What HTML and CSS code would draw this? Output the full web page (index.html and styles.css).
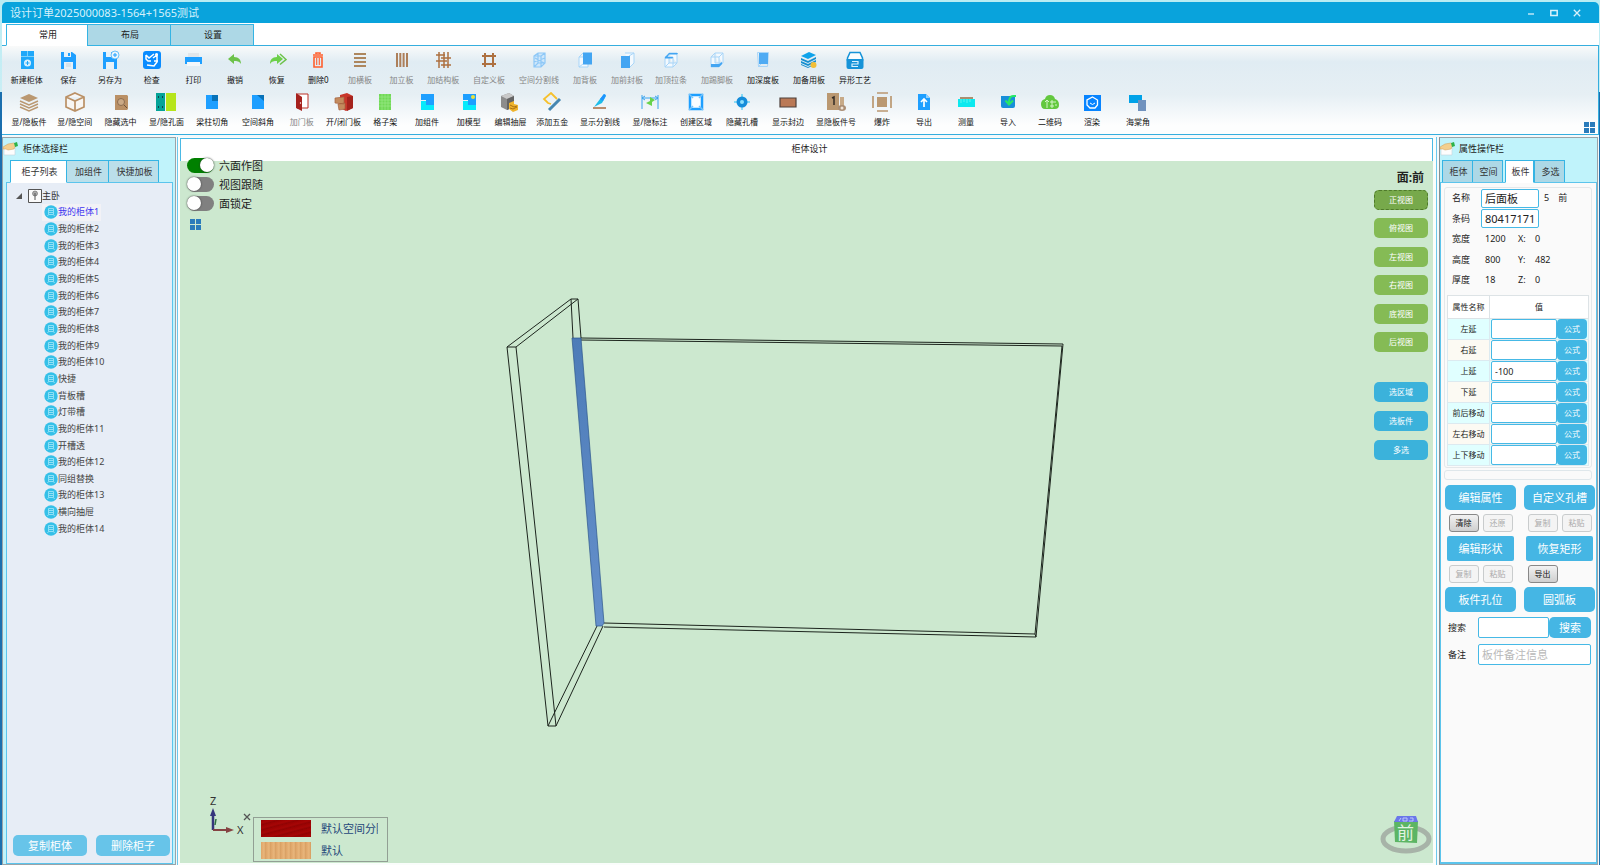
FILE: index.html
```html
<!DOCTYPE html>
<html lang="zh-CN">
<head>
    <meta charset="UTF-8">
    <meta name="viewport" content="width=device-width, initial-scale=1.0">
    <title>设计订单2025000083-1564+1565测试</title>
    <link rel="stylesheet" href="styles.css">
</head>
<body>
    <!-- Shared icons -->
    <svg class="defs" width="0" height="0">
        <symbol id="cabinet" viewBox="0 0 14 14">
            <circle cx="7" cy="7" r="6.700" fill="#35c0e8"/>
            <path d="M4.500 3.500h5v6h-5zM4.500 5.500h5M4.500 7.500h5M4.500 9.500L3.500 11M9.500 9.500l1 1.500" fill="none" stroke="#8fe0f6" stroke-width="1"/>
        </symbol>
        <symbol id="hand" viewBox="0 0 16 14">
            <path d="M1 6h11v7H1z" fill="#fdfdfd" stroke="#c4d4dc" stroke-width=".6"/>
            <path d="M0 5l5-3 6-1 2 2-2 4-6 1-2-1H0z" fill="#f3cf8e" stroke="#cf9c55" stroke-width=".5"/>
            <path d="M11 1l3-1 1 4-3 1z" fill="#2cb34a"/>
        </symbol>
        <symbol id="tiles" viewBox="0 0 11 11">
            <path d="M0 0h5v5H0zM6 0h5v5H6zM0 6h5v5H0zM6 6h5v5H6z" fill="#2a7cbb"/>
        </symbol>
    </svg>

    <header class="titlebar">
        <span>设计订单2025000083-1564+1565测试</span>
        <div class="window-buttons">
            <button aria-label="最小化"><svg viewBox="0 0 8 8" width="8" height="8"><path d="M1 5h6" stroke="#d7f1fb" stroke-width="1.300"/></svg></button>
            <button aria-label="最大化"><svg viewBox="0 0 8 8" width="8" height="8"><path d="M.8 1.500h6.400v5H.8z" fill="none" stroke="#d7f1fb" stroke-width="1.500"/></svg></button>
            <button aria-label="关闭"><svg viewBox="0 0 8 8" width="8" height="8"><path d="M.8.8l6.400 6.400M7.200.8L.8 7.200" stroke="#d7f1fb" stroke-width="1.300"/></svg></button>
        </div>
    </header>

    <nav class="menu-tabs">
        <button class="tab active">常用</button>
        <button class="tab">布局</button>
        <button class="tab">设置</button>
    </nav>

    <div class="toolbar">
        <div class="tool-row">
            <div class="tool-group file-group">
                <button class="tool"><svg viewBox="0 0 20 20"><path d="M4 1h13v5H4zM4 7h13v12H4z" fill="#1fa8fa"/><path d="M10.500 1v5M4 6.500h13" stroke="#7bd0fb"/><circle cx="10.500" cy="13" r="3.500" fill="#d9f1fe"/><path d="M10.500 11v4M8.500 13h4" stroke="#1fa8fa"/></svg><span>新建柜体</span></button>
                <button class="tool"><svg viewBox="0 0 20 20"><path d="M3 2h11l4 3v14H3z" fill="#1e9fff"/><path d="M6 2h7v5H6zM6 12h9v7H6z" fill="#e6f1f8"/><path d="M10 3h2v3h-2z" fill="#1e9fff"/><path d="M8 14h5M8 16h5" stroke="#b9c8d2" stroke-width=".7"/></svg><span>保存</span></button>
                <button class="tool"><svg viewBox="0 0 20 20"><path d="M3 2h11l3 3v14H3z" fill="#1e9fff"/><path d="M6 2h5v5H6zM6 12h8v7H6z" fill="#e6f1f8"/><circle cx="15" cy="5" r="4" fill="#eaf6fd" stroke="#4cb4f8" stroke-width=".8"/><path d="M15 3v4M13 5h4" stroke="#1e9fff"/></svg><span>另存为</span></button>
                <button class="tool"><svg viewBox="0 0 20 20"><rect x="1" y="1" width="18" height="18" rx="3" fill="#0a8cff"/><path d="M4 5v4l2 2h3M4 5l3 3 5-4M11 8l4-3v7l-3 4-7-1M12 11h4" fill="none" stroke="#fff" stroke-width="1.500"/><circle cx="14.500" cy="4.500" r="1.500" fill="#fff"/></svg><span>检查</span></button>
                <button class="tool"><svg viewBox="0 0 20 20"><path d="M5 3h11v4H5z" fill="#e1e6ea"/><path d="M2 7h17v7H2z" fill="#1e9fff"/><path d="M4 12h13v4H4z" fill="#f3f7fa"/></svg><span>打印</span></button>
                <button class="tool"><svg viewBox="0 0 20 20"><path d="M3 9l6-5v3c5 0 7 3 7 7-2-3-4-3-7-3v3z" fill="#6cc24a"/></svg><span>撤销</span></button>
                <button class="tool"><svg viewBox="0 0 20 20"><path d="M16 9l-6-5v3c-5 0-7 3-7 7 2-3 4-3 7-3v3z" fill="#6cd04a"/><path d="M13 4l6 5.500-6 5" fill="none" stroke="#6cc24a" stroke-width="1.500"/></svg><span>恢复</span></button>
                <button class="tool"><svg viewBox="0 0 20 20"><path d="M5 5h10M8 4V3h4v1M6 7h8v10H6z" fill="none" stroke="#ff5f2e" stroke-width="1.600"/><path d="M8.700 8v7M11.300 8v7" stroke="#ff5f2e" stroke-width="1.100"/></svg><span>删除0</span></button>
                <button class="tool" disabled><svg viewBox="0 0 20 20"><path d="M4 4h12M4 8h12M4 12h12M4 16h12" stroke="#ad875e" stroke-width="2"/></svg><span>加横板</span></button>
                <button class="tool" disabled><svg viewBox="0 0 20 20"><path d="M5 3v14M8.300 3v14M11.600 3v14M15 3v14" stroke="#ad7f5a" stroke-width="2"/></svg><span>加立板</span></button>
                <button class="tool" disabled><svg viewBox="0 0 20 20"><path d="M6 2v16M11 2v16M15 2v16M3 5h9M8 8h10M3 11h11M8 15h10" stroke="#ad7040" stroke-width="1.500"/></svg><span>加结构板</span></button>
            </div>
            <button class="tool wide" disabled><svg viewBox="0 0 20 20"><path d="M6 3v14M14 3v14M3 6h14M3 14h14" stroke="#ad7040" stroke-width="2"/></svg><span>自定义板</span></button>
            <button class="tool wide" disabled><svg viewBox="0 0 20 20"><path d="M5 6l4-3h7v10l-4 4H5z" fill="#cfe7fa"/><path d="M5 6l4-3h7v10l-4 4H5zM5 6h7v11M12 6l4-3M5 17l4-4h7M9 3v10M5 12l11-4M6 8l9 5" fill="none" stroke="#8ec8f7" stroke-width="1.200"/></svg><span>空间分割线</span></button>
            <button class="tool narrow" disabled><svg viewBox="0 0 20 20"><path d="M4 7l4-4M4 17l4-3M4 7h9v10H4z" fill="#f3f9fe" stroke="#a8d5f8" stroke-width="1"/><path d="M8 2.500h9v12H8z" fill="#43a5f2"/></svg><span>加背板</span></button>
            <button class="tool narrow" disabled><svg viewBox="0 0 20 20"><path d="M8 3h9v10l-4 4M12 6l5-3" fill="#f3f9fe" stroke="#a8d5f8"/><path d="M4 6h9v12H4z" fill="#43a5f2"/></svg><span>加前封板</span></button>
            <button class="tool" disabled><svg viewBox="0 0 20 20"><path d="M4 7h8v10H4zM8 3h8v10l-4 4M8 3v10h8M4 17l4-4" fill="#f3f9fe" stroke="#a8d5f8"/><path d="M4 7l4-4h9l-1 1.500H8L6.500 7H12l-.5 1.500H4z" fill="#43a5f2"/></svg><span>加顶拉条</span></button>
            <button class="tool" disabled><svg viewBox="0 0 20 20"><path d="M4 7h8v10H4zM8 3h8v10l-4 4M8 3v10h8M4 7l4-4M12 7l4-4" fill="#f3f9fe" stroke="#a8d5f8"/><path d="M4 14h8l3-2v2l-3 3H4z" fill="#43a5f2"/></svg><span>加踢脚板</span></button>
            <button class="tool"><svg viewBox="0 0 20 20"><path d="M4.500 2.500h11l-1 14h-9zM5 17l3-3" fill="none" stroke="#a8d5f8"/><path d="M6 3h9v11H6z" fill="#4fabf3"/></svg><span>加深度板</span></button>
            <button class="tool"><svg viewBox="0 0 20 20"><path d="M2 6l8-4 7 3-8 4z" fill="#0fa3ea"/><path d="M2 8l7 3 8-4v2l-8 4-7-3zM2 11l7 3 8-4v2l-8 4-7-3zM2 14l7 3 8-4v1l-8 4-7-3z" fill="#168fd0"/><circle cx="14.500" cy="15" r="3" fill="#f3bf37"/></svg><span>加备用板</span></button>
            <button class="tool"><svg viewBox="0 0 20 20"><path d="M2.500 11V8L5 2.500h10L17.500 8v3" fill="#f8fcfe" stroke="#1593d8" stroke-width="1.500"/><path d="M1.500 9h17v8q0 2-2 2h-13q-2 0-2-2z" fill="#1593d8"/><path d="M7 11.500h6v2.500H7v2.500h6" fill="none" stroke="#d8f2ff" stroke-width="1.200"/></svg><span>异形工艺</span></button>
        </div>
        <div class="tool-row">
            <div class="tool-group show-group">
                <button class="tool"><svg viewBox="0 0 20 20"><path d="M1 6l9-4 9 4-9 4z" fill="#ba9871"/><path d="M1 9l9 4 9-4M1 12l9 4 9-4M1 15l9 4 9-4" fill="none" stroke="#ba9871" stroke-width="1.500"/></svg><span>显/隐板件</span></button>
                <button class="tool"><svg viewBox="0 0 20 20"><path d="M10 1l9 4v10l-9 4-9-4V5zM1 5l9 4 9-4M10 9v10" fill="#f8f6f3" stroke="#ba9065" stroke-width="1.700"/></svg><span>显/隐空间</span></button>
                <button class="tool"><svg viewBox="0 0 20 20"><path d="M4 3h12l1 1v13l-1 1H4z" fill="#ba9065"/><circle cx="10" cy="10" r="3.500" fill="#cba985" stroke="#7d6045" stroke-width=".8"/><path d="M13 13l3 3" stroke="#6f533a"/></svg><span>隐藏选中</span></button>
                <button class="tool"><svg viewBox="0 0 20 20"><path d="M0 1h9v18H0z" fill="#05a398"/><path d="M10 1h10v18H10z" fill="#b6e51b"/><path d="M2 5h1M6 5h1M2 15h1M6 15h1" stroke="#123" stroke-width="1.500"/></svg><span>显/隐孔面</span></button>
                <button class="tool"><svg viewBox="0 0 20 20"><path d="M4 3h12v14H4z" fill="#1e9fff"/><path d="M10 3h6v6h-6z" fill="#0872b8"/></svg><span>梁柱切角</span></button>
                <button class="tool"><svg viewBox="0 0 20 20"><path d="M4 3h7l5 4v10H4z" fill="#1e9fff"/><path d="M9 3h7v6z" fill="#0872b8"/></svg><span>空间斜角</span></button>
            </div>
            <div class="tool-group part-group">
                <button class="tool" disabled><svg viewBox="0 0 20 20"><path d="M5 2h11v14H5z" fill="#fff" stroke="#bb3026"/><path d="M4 1l6 4v14l-6-3z" fill="#a6211d"/><circle cx="8.500" cy="11" r=".7" fill="#fff"/></svg><span>加门板</span></button>
                <button class="tool"><svg viewBox="0 0 20 20"><path d="M6 3l7-2 6 3v12l-7 3-6-3z" fill="#c9362a"/><path d="M13 5l6-1v12l-6 3z" fill="#a5231d"/><path d="M1 6l9-1v7l-9-1zM4 12l7-1v6l-6 1z" fill="#c48b5e" stroke="#a5623f" stroke-width=".7"/></svg><span>开/闭门板</span></button>
                <button class="tool"><svg viewBox="0 0 20 20"><path d="M4 2h12v16H4z" fill="#71d957"/><path d="M4 5h12M4 8h12M4 11h12M4 14h12M7 2v16M10 2v16M13 2v16" stroke="#9bea86" stroke-width=".7"/></svg><span>格子架</span></button>
                <button class="tool"><svg viewBox="0 0 20 20"><path d="M4 2h13v13H9V8H4z" fill="#1e9fff"/><path d="M4 9h5v4h8v5H4z" fill="#08eafb"/></svg><span>加组件</span></button>
                <button class="tool"><svg viewBox="0 0 20 20"><path d="M4 2h13v13H9V8H4z" fill="#1e9fff"/><path d="M4 9h5v4h8v5H4z" fill="#08eafb"/><circle cx="14" cy="5" r="2" fill="#ece23c"/></svg><span>加模型</span></button>
                <button class="tool"><svg viewBox="0 0 20 20"><path d="M1 4l8-3 5 3v11l-7 3-6-3z" fill="#8c8c8c"/><path d="M1 4l8-3 5 3-7 3z" fill="#c9c9c9"/><path d="M7 7l7-3v11l-7 3z" fill="#646464"/><path d="M9 11l5-2v3l4 1v5l-5 2-4-3z" fill="#efb42c"/><path d="M10 13l4 2 3-1M10 16l3 1 4-2" stroke="#ab7114" fill="none"/></svg><span>编辑抽屉</span></button>
                <button class="tool"><svg viewBox="0 0 20 20"><path d="M9 12l-3-1-4-4 7-6 6 6" fill="none" stroke="#f6c02b" stroke-width="1.800"/><path d="M7 18L18 7" stroke="#4687b1" stroke-width="3"/></svg><span>添加五金</span></button>
            </div>
            <button class="tool extra-wide"><svg viewBox="0 0 20 20"><path d="M3 16h13" stroke="#b98d6d" stroke-width="2"/><path d="M4 15l6-8 4-5 2 2-4 7z" fill="#1dbde9"/><path d="M10 7l4-5 2 1-3 6z" fill="#1e92ff"/></svg><span>显示分割线</span></button>
            <button class="tool"><svg viewBox="0 0 20 20"><path d="M2 3v14M18 3v14M2 6h16M5 4L2 6l3 2M15 4l3 2-3 2" fill="none" stroke="#3ba4ee"/><path d="M10 5v4l-4 2 6 3v-4l3-2z" fill="#68d34b"/></svg><span>显/隐标注</span></button>
            <button class="tool"><svg viewBox="0 0 20 20"><path d="M4 3h12v14H4z" fill="#f9fcff" stroke="#1e9fff" stroke-width="2.500"/><path d="M3 2l4 4M17 2l-4 4M3 18l4-4M17 18l-4-4" stroke="#77c3fa" stroke-width="1.500"/></svg><span>创建区域</span></button>
            <button class="tool"><svg viewBox="0 0 20 20"><path d="M10 2v16M2 10h16" stroke="#29c5f6"/><circle cx="10" cy="10" r="5.500" fill="#158dda"/><circle cx="10" cy="10" r="2" fill="#8bdefc"/></svg><span>隐藏孔槽</span></button>
            <button class="tool"><svg viewBox="0 0 20 20"><path d="M2 6h16v9H2z" fill="#ba7956" stroke="#4d403b" stroke-width="1.200"/></svg><span>显示封边</span></button>
            <button class="tool wide"><svg viewBox="0 0 20 20"><path d="M1 1h12v17H1z" fill="#ba9871"/><path d="M14 5h4v12h-4z" fill="#c7aa88"/><path d="M6 6l2-1v8" stroke="#332b25" stroke-width="1.500" fill="none"/><ellipse cx="16" cy="16" rx="4" ry="3" fill="#aa8e75"/><circle cx="16" cy="16" r="1.500" fill="#efe4d7"/></svg><span>显隐板件号</span></button>
            <button class="tool narrow"><svg viewBox="0 0 20 20"><path d="M5 5h10v10H5z" fill="#ba9871"/><path d="M5 1h11M5 19h11M1 4v12M19 4v12" stroke="#ba9871" stroke-width="1.700"/></svg><span>爆炸</span></button>
            <button class="tool narrow"><svg viewBox="0 0 20 20"><path d="M4 2h8l4 4v12H4z" fill="#1e9fff"/><path d="M12 2v4h4" fill="#8fd0ff"/><path d="M10 15V8M7 10l3-3 3 3" fill="none" stroke="#fff" stroke-width="1.700"/></svg><span>导出</span></button>
            <button class="tool narrow"><svg viewBox="0 0 20 20"><path d="M4 5h13v3H4z" fill="#aa8f70"/><path d="M2 7h17v8H2z" fill="#0ce9ef"/><path d="M5 7v4M8 7v3M11 7v4M14 7v3" stroke="#5af6ee" stroke-width="1"/></svg><span>测量</span></button>
            <button class="tool narrow"><svg viewBox="0 0 20 20"><path d="M3 4h14v10q0 2-2 2H5q-2 0-2-2z" fill="#178fd9"/><path d="M18 4h-3q-4 0-4 7M7.500 8.500l3.500 4 4-4" fill="none" stroke="#27e767" stroke-width="2"/></svg><span>导入</span></button>
            <button class="tool narrow"><svg viewBox="0 0 20 20"><path d="M1 12q0-4 4-5 1-4 5-4t5 4q4 1 4 6 0 4-4 4H5q-4 0-4-5z" fill="#63c83f"/><path d="M7 16V8M5 10l2-2 2 2M11 9h2v2h-2zM15 9v2M11 13h2v2h-2zM15 13h2" fill="none" stroke="#d3f5c7"/></svg><span>二维码</span></button>
            <button class="tool narrow"><svg viewBox="0 0 20 20"><path d="M2 3h17v16H2z" fill="#0784ff"/><path d="M10.500 5l5 3v5l-2.500 3h-5L5 13V8z" fill="none" stroke="#fff" stroke-width="1.300"/><path d="M8 11q2.500 3 5 0" fill="none" stroke="#fff"/></svg><span>渲染</span></button>
            <button class="tool wide"><svg viewBox="0 0 20 20"><path d="M1 3h13v8H1z" fill="#00a2e8"/><path d="M10 8h8v11h-8z" fill="#7092be"/></svg><span>海棠角</span></button>
        </div>
        <button class="corner-button" aria-label="布局"><svg width="11" height="11"><use href="#tiles"/></svg></button>
    </div>

    <main class="workspace">
        <aside class="panel left-panel">
            <h2 class="panel-title"><svg width="16" height="14"><use href="#hand"/></svg>柜体选择栏</h2>
            <div class="panel-tabs">
                <button class="tab active">柜子列表</button>
                <button class="tab">加组件</button>
                <button class="tab">快捷加板</button>
            </div>
            <div class="panel-body">
                <div class="tree-root">
                    <svg width="6" height="6" viewBox="0 0 6 6"><path d="M6 0v6H0z" fill="#555"/></svg>
                    <svg width="14" height="14" viewBox="0 0 14 14"><path d="M.5.5h13v13H.5z" fill="#fafafa" stroke="#555"/><circle cx="7" cy="4.500" r="2.500" fill="#aaa" stroke="#666" stroke-width=".6"/><path d="M7 4v7" stroke="#555"/></svg>
                    <span>主卧</span>
                </div>
                <ul class="tree">
                    <li class="selected"><svg><use href="#cabinet"/></svg>我的柜体1</li>
                    <li><svg><use href="#cabinet"/></svg>我的柜体2</li>
                    <li><svg><use href="#cabinet"/></svg>我的柜体3</li>
                    <li><svg><use href="#cabinet"/></svg>我的柜体4</li>
                    <li><svg><use href="#cabinet"/></svg>我的柜体5</li>
                    <li><svg><use href="#cabinet"/></svg>我的柜体6</li>
                    <li><svg><use href="#cabinet"/></svg>我的柜体7</li>
                    <li><svg><use href="#cabinet"/></svg>我的柜体8</li>
                    <li><svg><use href="#cabinet"/></svg>我的柜体9</li>
                    <li><svg><use href="#cabinet"/></svg>我的柜体10</li>
                    <li><svg><use href="#cabinet"/></svg>快捷</li>
                    <li><svg><use href="#cabinet"/></svg>背板槽</li>
                    <li><svg><use href="#cabinet"/></svg>灯带槽</li>
                    <li><svg><use href="#cabinet"/></svg>我的柜体11</li>
                    <li><svg><use href="#cabinet"/></svg>开槽透</li>
                    <li><svg><use href="#cabinet"/></svg>我的柜体12</li>
                    <li><svg><use href="#cabinet"/></svg>同组替换</li>
                    <li><svg><use href="#cabinet"/></svg>我的柜体13</li>
                    <li><svg><use href="#cabinet"/></svg>横向抽屉</li>
                    <li><svg><use href="#cabinet"/></svg>我的柜体14</li>
                </ul>
                <div class="tree-actions">
                    <button>复制柜体</button>
                    <button>删除柜子</button>
                </div>
            </div>
        </aside>

        <section class="design">
            <h2 class="design-title">柜体设计</h2>
            <div class="canvas">
                <svg class="scene" viewBox="0 0 1253 702" preserveAspectRatio="none">
                    <defs>
                        <linearGradient id="edge" x1="0" y1="0" x2="0" y2="1">
                            <stop offset="0" stop-color="#4d7cb8"/>
                            <stop offset="1" stop-color="#6590cb"/>
                        </linearGradient>
                    </defs>
                    <g fill="none" stroke="#1c241d" stroke-width="1">
                        <!-- side board -->
                        <path d="M327 186H336L376 565H368z"/>
                        <path d="M327 186L391 138H398L336 186"/>
                        <path d="M391 138L393 177M398 138L401 177"/>
                        <path d="M368 565L417 465M376 565L423 465"/>
                        <!-- back board -->
                        <path d="M401 177L883 183L856 476L424 466"/>
                        <path d="M401 179L882 185L855 473L424 462"/>
                        <path d="M855 473l1 3"/>
                    </g>
                    <path d="M392 177h9l23 285-2 3h-6z" fill="url(#edge)" stroke="#2d568c" stroke-width=".7"/>
                </svg>

                <div class="switches">
                    <label><input type="checkbox" checked>六面作图</label>
                    <label><input type="checkbox">视图跟随</label>
                    <label><input type="checkbox">面锁定</label>
                    <button aria-label="视图"><svg width="11" height="11"><use href="#tiles"/></svg></button>
                </div>

                <div class="views">
                    <strong>面:前</strong>
                    <div class="view-buttons">
                        <button class="current">正视图</button>
                        <button>俯视图</button>
                        <button>左视图</button>
                        <button>右视图</button>
                        <button>底视图</button>
                        <button>后视图</button>
                    </div>
                    <div class="select-buttons">
                        <button>选区域</button>
                        <button>选板件</button>
                        <button>多选</button>
                    </div>
                </div>

                <div class="axis-legend">
                    <svg width="38" height="46" viewBox="0 0 38 46">
                        <path d="M6 38V22" stroke="#35357c" stroke-width="2.500"/>
                        <path d="M3 24l3-8 3 8z" fill="#35357c"/>
                        <path d="M8 33l1-6" stroke="#2d7040" stroke-width="1.500"/>
                        <path d="M6 38h14" stroke="#854242" stroke-width="2"/>
                        <path d="M19 35l8 3-8 3z" fill="#854242"/>
                        <text x="3" y="13">Z</text>
                        <text x="30" y="42">X</text>
                    </svg>
                    <button class="legend-close" aria-label="关闭图例"><svg width="8" height="8" viewBox="0 0 8 8"><path d="M1 1l6 6M7 1L1 7" stroke="#555" stroke-width="1.300"/></svg></button>
                    <div class="legend">
                        <span class="swatch red"></span><span class="name">默认空间分隔</span>
                        <span class="swatch wood"></span><span class="name">默认</span>
                    </div>
                </div>

                <svg class="cube" width="52" height="40" viewBox="0 0 52 40">
                    <ellipse cx="26" cy="24" rx="23" ry="12" fill="none" stroke="#a7b3a8" stroke-width="5"/>
                    <path d="M14 6h24l-1 22-22-1z" fill="#5cb564"/>
                    <path d="M17 1h19l2 6H14z" fill="#6b77ea"/>
                    <path d="M21 3l-2 3M23 3h4v3h-4zM30 3h3v3h-4" stroke="#bdc6fa" fill="none"/>
                    <text x="17" y="24">前</text>
                </svg>
            </div>
        </section>

        <aside class="panel right-panel">
            <h2 class="panel-title"><svg width="16" height="14"><use href="#hand"/></svg>属性操作栏</h2>
            <div class="panel-tabs">
                <button class="tab">柜体</button>
                <button class="tab">空间</button>
                <button class="tab active">板件</button>
                <button class="tab">多选</button>
            </div>
            <div class="panel-body">
                <div class="board-box">
                    <div class="board-info">
                        <label for="boardName">名称</label><input type="text" id="boardName" value="后面板"><div class="side"><span>5</span><span>前</span></div>
                        <label for="barcode">条码</label><input type="text" id="barcode" value="80417171">
                        <span class="key">宽度</span><span class="size">1200</span><span>X:</span><span>0</span>
                        <span class="key">高度</span><span class="size">800</span><span>Y:</span><span>482</span>
                        <span class="key">厚度</span><span class="size">18</span><span>Z:</span><span>0</span>
                    </div>
                    <table class="props">
                        <thead>
                            <tr><th>属性名称</th><th>值</th></tr>
                        </thead>
                        <tbody>
                            <tr><td><label for="p1">左延</label></td><td><div><input type="text" id="p1"><button>公式</button></div></td></tr>
                            <tr><td><label for="p2">右延</label></td><td><div><input type="text" id="p2"><button>公式</button></div></td></tr>
                            <tr><td><label for="p3">上延</label></td><td><div><input type="text" id="p3" value="-100"><button>公式</button></div></td></tr>
                            <tr><td><label for="p4">下延</label></td><td><div><input type="text" id="p4"><button>公式</button></div></td></tr>
                            <tr><td><label for="p5">前后移动</label></td><td><div><input type="text" id="p5"><button>公式</button></div></td></tr>
                            <tr><td><label for="p6">左右移动</label></td><td><div><input type="text" id="p6"><button>公式</button></div></td></tr>
                            <tr><td><label for="p7">上下移动</label></td><td><div><input type="text" id="p7"><button>公式</button></div></td></tr>
                        </tbody>
                    </table>
                </div>
                <div class="empty-box"></div>
                <div class="actions">
                    <button class="main-action">编辑属性</button>
                    <button class="main-action">自定义孔槽</button>
                    <div class="small-actions"><button>清除</button><button disabled>还原</button></div>
                    <div class="small-actions"><button disabled>复制</button><button disabled>粘贴</button></div>
                    <button class="main-action shape">编辑形状</button>
                    <button class="main-action shape">恢复矩形</button>
                    <div class="small-actions"><button disabled>复制</button><button disabled>粘贴</button></div>
                    <div class="small-actions"><button>导出</button></div>
                    <button class="main-action">板件孔位</button>
                    <button class="main-action">圆弧板</button>
                </div>
                <div class="search-row">
                    <label for="search">搜索</label>
                    <input type="text" id="search">
                    <button>搜索</button>
                </div>
                <div class="search-row">
                    <label for="remark">备注</label>
                    <input type="text" id="remark" placeholder="板件备注信息">
                </div>
            </div>
        </aside>
    </main>
</body>
</html>
```
FILE: styles.css
```css
* {
    box-sizing: border-box;
}

body {
    margin: 0;
    height: 100vh;
    padding: 2px 1px 0 2px;
    display: flex;
    flex-direction: column;
    overflow: hidden;
    font-family: "Noto Sans", "Noto Sans CJK SC", sans-serif;
    font-size: 9px;
    line-height: 12px;
    color: #222;
    background: linear-gradient(#b9ecf3 0, #c9eef5 92px, #1b6fae 92px);
}

button, input {
    font-family: inherit;
    font-size: inherit;
    line-height: inherit;
    color: inherit;
    margin: 0;
}

button {
    padding: 0;
    border: none;
    background: none;
    white-space: nowrap;
}

svg {
    display: block;
    flex: none;
}

h2 {
    margin: 0;
    font-size: 9px;
    font-weight: normal;
}

.defs {
    position: absolute;
}

/* Title bar */
.titlebar {
    display: flex;
    justify-content: space-between;
    align-items: center;
    height: 21px;
    padding: 1px 18px 0 8px;
    border-radius: 5px 5px 0 0;
    background: #09a3dc;
    color: #d5f1fb;
    font-size: 11px;
}

.window-buttons {
    display: flex;
    gap: 15px;
}

/* Tabs */
.menu-tabs {
    display: flex;
    height: 23px;
    padding: 1px 4px 0;
    background: #fff;
    border-bottom: 1px solid #35aede;
}

.tab {
    height: 22px;
    padding-left: 2px;
    border: 1px solid #35b4e4;
    background: #add8e6;
    margin-left: -1px;
}

.tab.active {
    background: #fff;
    border-bottom-color: #fff;
}

.menu-tabs .tab {
    width: 84px;
}

.menu-tabs .tab.active {
    margin-left: 0;
    width: 82px;
}

/* Toolbar */
.toolbar {
    position: relative;
    display: flex;
    flex-direction: column;
    gap: 7px;
    height: 89px;
    padding: 4px;
    border-right: 1px solid #35aede;
    border-bottom: 1px solid #35aede;
    background: linear-gradient(#f9fafa, #e0ecf3 18%, #e6eff4 55%, #fdfefe 90%);
    color: #111;
    font-size: 8px;
    line-height: 10px;
}

.tool-row, .tool-group {
    display: flex;
}

.file-group {
    width: 458px;
}

.show-group {
    width: 275px;
}

.part-group {
    width: 292px;
}

.tool {
    display: flex;
    flex-direction: column;
    align-items: center;
    gap: 5px;
    width: 46px;
}

.tool-group .tool {
    flex: 1;
    width: 0;
}

.tool.narrow {
    width: 42px;
}

.tool.wide {
    width: 50px;
}

.tool.extra-wide {
    width: 54px;
}

.tool svg {
    width: 20px;
    height: 20px;
}

.tool:disabled {
    color: #858585;
}

.corner-button {
    position: absolute;
    right: 3px;
    bottom: 1px;
}

/* Workspace */
.workspace {
    flex: 1;
    min-height: 0;
    display: flex;
    padding: 2px 1px 0 0;
    background: #f4f9fb;
}

.panel {
    display: flex;
    flex-direction: column;
    border: 1px solid #9aa3a8;
    background: #c0f3fb;
}

.panel-title {
    display: flex;
    align-items: center;
    gap: 4px;
    height: 22px;
}

.panel-tabs {
    display: flex;
    height: 23px;
}

.panel-tabs .tab {
    height: 23px;
    color: #333;
}

.panel-body {
    flex: 1;
    min-height: 0;
    display: flex;
    flex-direction: column;
    margin-top: -1px;
    border: 1px solid #5bc4ec;
}

.panel-tabs .tab.active {
    position: relative;
    z-index: 1;
}

.left-panel {
    width: 174px;
}

.left-panel .panel-tabs {
    padding-left: 8px;
}

.left-panel .tab {
    width: 43px;
    background: #bbdfea;
}

.left-panel .tab.active {
    width: 57px;
    background: #fff;
}

.left-panel .tab:last-child {
    width: 51px;
}

.left-panel .panel-body {
    margin-left: 3px;
    margin-right: 2px;
    background: #e7edf6;
}

.tree-root {
    display: flex;
    align-items: center;
    padding: 5px 0 0 9px;
    height: 21px;
    color: #333;
}

.tree-root svg + svg {
    margin-left: 6px;
}

.tree {
    display: flex;
    flex-direction: column;
    align-items: flex-start;
    height: 333px;
    margin: 0 0 0 35px;
    padding: 0;
    list-style: none;
    color: #444;
}

.tree li {
    flex: 1;
    display: flex;
    align-items: center;
    padding: 0 2px;
}

.tree svg {
    width: 14px;
    height: 14px;
}

.tree .selected {
    background: #f2f2f6;
    color: #4034f0;
}

.tree-actions {
    display: flex;
    gap: 9px;
    margin-top: auto;
    padding: 0 2px 7px 6px;
}

.tree-actions button {
    flex: 1;
    height: 21px;
    border-radius: 5px;
    background: #67c4e9;
    color: #fff;
    font-size: 11px;
}

/* Design area */
.design {
    flex: 1;
    min-width: 0;
    display: flex;
    flex-direction: column;
    margin: 0 2px 0 1px;
    padding: 1px 3px 2px 2px;
    border-left: 1px solid #6cc8ed;
    border-right: 1px solid #6cc8ed;
    background: #fafdfb;
}

.design-title {
    height: 23px;
    border: 1px solid #4ab9e5;
    border-bottom: none;
    background: #fff;
    text-align: center;
    line-height: 20px;
    padding-left: 6px;
}

.canvas {
    position: relative;
    flex: 1;
    min-height: 0;
    background: #cce8cf;
}

.scene {
    width: 100%;
    height: 100%;
}

.switches {
    position: absolute;
    left: 7px;
    top: -5px;
    display: flex;
    flex-direction: column;
    align-items: flex-start;
    font-size: 11px;
}

.switches label {
    display: flex;
    align-items: center;
    gap: 5px;
    height: 19px;
}

.switches input {
    appearance: none;
    width: 27px;
    height: 15px;
    border-radius: 8px;
    background: #808080;
}

.switches input::before {
    content: "";
    display: block;
    width: 14px;
    height: 14px;
    border-radius: 50%;
    background: #fff;
    box-shadow: 0 0 2px #333;
}

.switches input:checked {
    background: #008000;
}

.switches input:checked::before {
    margin-left: 13px;
}

.switches button {
    padding: 6px 3px;
}

.views {
    position: absolute;
    top: 8px;
    right: 5px;
    width: 54px;
    display: flex;
    flex-direction: column;
}

.views strong {
    margin-right: 4px;
    text-align: right;
    font-size: 12px;
    line-height: 17px;
}

.views button {
    height: 20px;
    border-radius: 5px;
    background: #3bb2db;
    color: #fff;
    font-size: 8px;
}

.view-buttons, .select-buttons {
    display: flex;
    flex-direction: column;
    justify-content: space-between;
    height: 162px;
    margin-top: 4px;
}

.select-buttons {
    height: 78px;
    margin-top: 30px;
}

.view-buttons button {
    background: #85bb55;
}

.view-buttons .current {
    background: #77a94b;
    outline: 1px dashed #4f7a2b;
    outline-offset: -1px;
}

.axis-legend {
    position: absolute;
    left: 27px;
    bottom: 1px;
    display: flex;
    align-items: flex-start;
    height: 70px;
}

.axis-legend text {
    font-size: 11px;
    fill: #333;
}

.legend-close {
    margin: 21px 2px 0 -2px;
}

.legend {
    align-self: flex-end;
    display: grid;
    grid-template-columns: 50px 57px;
    column-gap: 10px;
    row-gap: 4px;
    width: 135px;
    height: 45px;
    padding: 2px 7px;
    border: 1px solid #929f94;
    color: #25477a;
    font-size: 11px;
    line-height: 17px;
}

.legend .name {
    overflow: hidden;
    white-space: nowrap;
}

.swatch {
    height: 17px;
}

.swatch.red {
    background: repeating-linear-gradient(165deg, #980202 0, #a60606 3px, #8e0303 5px);
}

.swatch.wood {
    background: repeating-linear-gradient(90deg, #dfa568 0, #e8b67c 3px, #d59b5e 5px);
}

.cube {
    position: absolute;
    right: 1px;
    bottom: 8px;
}

.cube text {
    font-size: 17px;
    fill: #e2f3e2;
}

/* Property panel */
.right-panel {
    width: 159px;
    border-left-color: #858f94;
}

.right-panel .panel-title {
    gap: 3px;
}

.right-panel .panel-tabs {
    padding-left: 3px;
}

.right-panel .tab {
    width: 31px;
}

.right-panel .tab.active {
    margin: 0 1px 0 2px;
    width: 29px;
}

.right-panel .panel-body {
    background: #fafafa;
    border-bottom-width: 2px;
    padding: 4px 4px 4px 3px;
}

.board-box {
    padding: 0 2px 1px;
    border: 1px solid #e4e8ea;
    border-radius: 3px;
}

.board-info {
    display: grid;
    grid-template-columns: 29px 37px 17px 1fr;
    grid-template-rows: 20px 21px 20px 21px 20px;
    align-items: center;
    padding: 0 0 5px 5px;
    color: #222;
}

input[type="text"] {
    min-width: 0;
    border: 1px solid #46b9e6;
    border-radius: 2px;
    background: #fff;
    outline: none;
}

.board-info input {
    grid-column: 2 / 4;
    width: 58px;
    height: 19px;
    padding: 0 3px;
    font-size: 11px;
}

.board-info .size {
    padding-left: 4px;
}

.board-info .side {
    display: flex;
    gap: 9px;
    padding-left: 9px;
}

.board-info .key {
    grid-column: 1;
}

.props {
    width: 100%;
    table-layout: fixed;
    border-collapse: collapse;
    background: #fff;
    font-size: 8px;
}

.props th {
    height: 23px;
    padding: 0;
    border: 1px solid #dde3e6;
    font-weight: normal;
}

.props th:first-child {
    width: 42px;
}

.props td {
    height: 21px;
    padding: 0;
    border: 1px solid #dceaf0;
    text-align: center;
    white-space: nowrap;
}

.props tbody tr:nth-child(odd) {
    background: #e0ffff;
}

.props tbody tr:nth-child(even) {
    background: #fcfaf3;
}

.props td div {
    display: flex;
    padding: 0 1px;
}

.props input {
    flex: 1;
    height: 20px;
    padding: 0 3px;
    font-size: 9px;
}

.props td button {
    width: 30px;
    height: 20px;
    border-radius: 4px;
    background: #42b7e4;
    color: #fff;
}

.empty-box {
    flex: none;
    height: 10px;
    margin-top: 2px;
    border: 1px solid #dfe7eb;
    border-radius: 3px;
}

.actions {
    display: grid;
    grid-template-columns: 71px 71px;
    justify-content: space-between;
    justify-items: center;
    row-gap: 4px;
    margin: 5px -3px 0 1px;
}

.main-action {
    width: 100%;
    height: 25px;
    border-radius: 5px;
    background: #45b6e4;
    color: #fff;
    font-size: 11px;
}

.main-action.shape {
    width: 67px;
    border-radius: 2px;
}

.small-actions {
    display: flex;
    gap: 4px;
    width: 64px;
}

.small-actions button {
    width: 30px;
    height: 18px;
    border: 1px solid #888;
    border-radius: 3px;
    background: linear-gradient(#f2f2f2, #cfcfcf);
    color: #111;
    font-size: 8px;
}

.small-actions button:disabled {
    border-color: #c9cccd;
    background: #f4f4f4;
    color: #aaa;
}

.search-row {
    display: flex;
    align-items: center;
    margin-top: 5px;
    padding: 0 1px 0 4px;
}

.search-row + .search-row {
    margin-top: 6px;
}

.search-row label {
    flex: none;
    width: 30px;
}

.search-row input {
    flex: 1;
    height: 21px;
    padding: 0 3px;
    font-size: 11px;
}

.search-row button {
    flex: none;
    width: 42px;
    height: 21px;
    border-radius: 5px;
    background: #45b6e4;
    color: #fff;
    font-size: 11px;
}

.search-row input::placeholder {
    color: #b9b9b9;
}
```
